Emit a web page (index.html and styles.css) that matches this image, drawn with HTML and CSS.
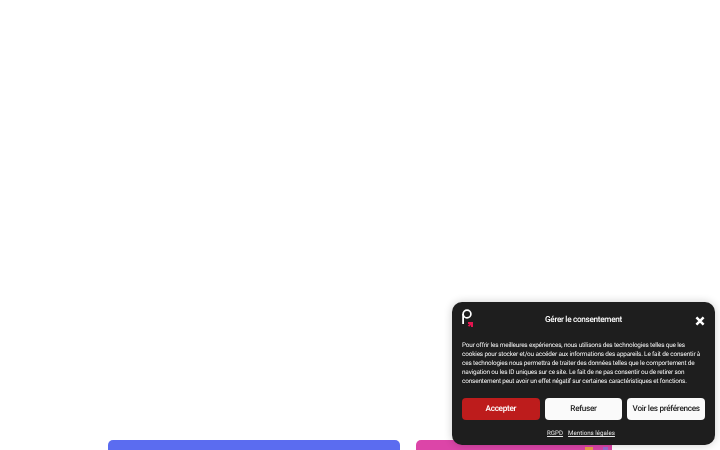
FILE: index.html
```html
<!DOCTYPE html>
<html lang="fr">
<head>
    <meta charset="UTF-8">
    <meta name="viewport" content="width=device-width, initial-scale=1.0">
    <title>Gérer le consentement</title>
    <link rel="stylesheet" href="styles.css">
</head>
<body>
    <div class="cards">
        <div class="card card-blue"></div>
        <div class="card card-pink">
            <span class="dot dot-orange"></span>
            <span class="dot dot-violet"></span>
        </div>
    </div>

    <div class="banner">
        <div class="banner-head">
            <svg class="logo" width="12" height="20" viewBox="0 0 12 20">
                <circle cx="5" cy="5" r="3.9" fill="none" stroke="#fff" stroke-width="1.7"/>
                <path d="M1.1 5V15" stroke="#fff" stroke-width="1.8"/>
                <path d="M6 13h5v5H9v-2l-1.8 1.8L5.8 16.4 7.6 15H6z" fill="#e4144f"/>
            </svg>
            <div class="banner-title">Gérer le consentement</div>
            <svg class="close" width="10" height="10" viewBox="0 0 10 10">
                <path d="M1.4 1.4l7.2 7.2M8.6 1.4L1.4 8.6" stroke="#fff" stroke-width="2.5"/>
            </svg>
        </div>
        <p class="banner-text">Pour offrir les meilleures expériences, nous utilisons des technologies telles que les cookies pour stocker et/ou accéder aux informations des appareils. Le fait de consentir à ces technologies nous permettra de traiter des données telles que le comportement de navigation ou les ID uniques sur ce site. Le fait de ne pas consentir ou de retirer son consentement peut avoir un effet négatif sur certaines caractéristiques et fonctions.</p>
        <div class="banner-buttons">
            <button class="btn btn-accept">Accepter</button>
            <button class="btn">Refuser</button>
            <button class="btn">Voir les préférences</button>
        </div>
        <div class="banner-links">
            <a href="#">RGPD</a>
            <a href="#">Mentions légales</a>
        </div>
    </div>
</body>
</html>
```

FILE: styles.css
```css
html, body {
    margin: 0;
    height: 450px;
    overflow: hidden;
    background: #fff;
    font-family: Roboto, sans-serif;
    text-rendering: geometricPrecision;
}
.cards {
    display: flex;
    gap: 16px;
    padding: 440px 0 0 108px;
    height: 10px;
    overflow: hidden;
}
.card {
    height: 40px;
    border-radius: 5px 5px 0 0;
}
.card-blue {
    width: 292px;
    background: #5b6cf0;
}
.card-pink {
    position: relative;
    width: 196px;
    background: #dc45a8;
}
.dot {
    position: absolute;
    top: 7px;
    height: 6px;
}
.dot-orange { left: 169px; width: 8px; background: #e8a04c; }
.dot-violet { left: 187px; width: 5px; background: #9a6ed0; }
.banner {
    position: fixed;
    left: 452px;
    top: 302px;
    width: 263px;
    height: 143px;
    box-sizing: border-box;
    padding: 7px 10px 0;
    background: #1e1e1e;
    border-radius: 10px;
    box-shadow: 0 0 8px rgba(0,0,0,0.2);
    color: #fff;
}
.banner-head {
    position: relative;
    display: flex;
    justify-content: center;
    align-items: center;
    height: 20px;
}
.logo {
    position: absolute;
    left: 0;
    top: 0;
}
.close {
    position: absolute;
    right: 0;
    top: 7px;
}
.banner-title {
    font-size: 8.2px;
    letter-spacing: -0.3px;
    font-weight: 500;
    line-height: 20px;
    margin-top: 1px;
}
.banner-text {
    margin: 12px 0 0;
    font-size: 6.4px;
    letter-spacing: -0.16px;
    line-height: 9px;
    color: #f6f6f6;
}
.banner-buttons {
    display: grid;
    grid-template-columns: repeat(3, 1fr);
    gap: 5px;
    margin-top: 12px;
}
.btn {
    height: 22px;
    padding: 0;
    border: none;
    border-radius: 4px;
    background: #fafafa;
    color: #222;
    font-family: Roboto, sans-serif;
    font-size: 8.2px;
    letter-spacing: -0.3px;
    font-weight: 500;
    text-rendering: geometricPrecision;
}
.btn-accept {
    background: #bd1c1c;
    color: #fff;
}
.banner-links {
    display: flex;
    justify-content: center;
    gap: 5px;
    margin-top: 9px;
    padding-right: 5px;
}
.banner-links a {
    color: #e8e8e8;
    font-size: 6.2px;
    line-height: 8px;
}
```
